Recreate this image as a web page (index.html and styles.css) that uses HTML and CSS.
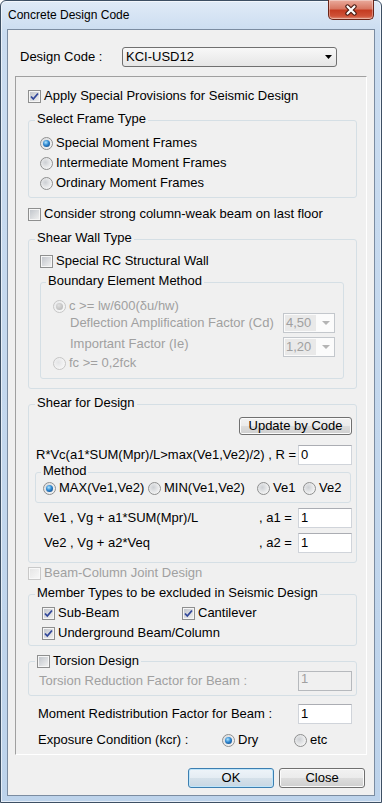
FILE: index.html
```html
<!DOCTYPE html>
<html lang="en">
<head>
  <meta charset="UTF-8">
  <title>Concrete Design Code</title>
  <link rel="stylesheet" href="styles.css">
</head>
<body>
  <div class="window">
    <div class="titlebar">
      <span class="title">Concrete Design Code</span>
      <span class="close-btn">
        <svg width="14" height="12" viewBox="0 0 14 12">
          <path d="M3.5 2.5 L10.5 9.5 M10.5 2.5 L3.5 9.5" stroke="#4a1b12" stroke-width="4.4" stroke-linecap="round"/>
          <path d="M3.5 2.5 L10.5 9.5 M10.5 2.5 L3.5 9.5" stroke="#fff" stroke-width="2.2" stroke-linecap="round"/>
        </svg>
      </span>
    </div>

    <div class="client">
      <div class="code-row">
        <span class="code-label">Design Code :</span>
        <div class="combo code-combo">
          <span class="combo-value">KCI-USD12</span>
          <svg width="7" height="4" viewBox="0 0 7 4"><path d="M0 0H7L3.5 4Z" fill="#000"/></svg>
        </div>
      </div>

      <div class="panel">
        <div class="row">
          <span class="chk"><svg width="11" height="11" viewBox="0 0 11 11"><path d="M2 5.5 L4.3 8 L9 2.5" fill="none" stroke="#31479a" stroke-width="1.8"/></svg></span>
          Apply Special Provisions for Seismic Design
        </div>

        <fieldset class="group frame-group">
          <legend>Select Frame Type</legend>
          <div class="group-body">
            <div class="row"><span class="radio on"></span>Special Moment Frames</div>
            <div class="row"><span class="radio"></span>Intermediate Moment Frames</div>
            <div class="row"><span class="radio"></span>Ordinary Moment Frames</div>
          </div>
        </fieldset>

        <div class="row consider-row"><span class="chk"></span>Consider strong column-weak beam on last floor</div>

        <fieldset class="group wall-group">
          <legend>Shear Wall Type</legend>
          <div class="group-body">
            <div class="row"><span class="chk"></span>Special RC Structural Wall</div>

            <fieldset class="group boundary-group">
              <legend>Boundary Element Method</legend>
              <div class="group-body">
                <div class="row dis"><span class="radio on dis"></span>c &gt;= lw/600(δu/hw)</div>
                <div class="field-row factor-row dis">
                  <span>Deflection Amplification Factor (Cd)</span>
                  <div class="combo small-combo">
                    <span class="combo-value">4,50</span>
                    <svg width="8" height="4" viewBox="0 0 8 4"><path d="M0 0H8L4 4Z" fill="#b4b4b4"/></svg>
                  </div>
                </div>
                <div class="field-row factor-row second dis">
                  <span class="raised">Important Factor (Ie)</span>
                  <div class="combo small-combo">
                    <span class="combo-value">1,20</span>
                    <svg width="8" height="4" viewBox="0 0 8 4"><path d="M0 0H8L4 4Z" fill="#b4b4b4"/></svg>
                  </div>
                </div>
                <div class="row dis fc-row"><span class="radio dis"></span>fc &gt;= 0,2fck</div>
              </div>
            </fieldset>
          </div>
        </fieldset>

        <fieldset class="group shear-group">
          <legend>Shear for Design</legend>
          <div class="group-body">
            <div class="update-row"><button class="btn update-btn">Update by Code</button></div>
            <div class="field-row r-row">
              <span>R*Vc(a1*SUM(Mpr)/L&gt;max(Ve1,Ve2)/2) , R =</span>
              <span class="edit">0</span>
            </div>

            <fieldset class="group method-group">
              <legend>Method</legend>
              <div class="group-body">
                <div class="row method-row">
                  <span class="opt opt-max"><span class="radio on"></span>MAX(Ve1,Ve2)</span>
                  <span class="opt opt-min"><span class="radio"></span>MIN(Ve1,Ve2)</span>
                  <span class="opt opt-ve1"><span class="radio"></span>Ve1</span>
                  <span class="opt"><span class="radio"></span>Ve2</span>
                </div>
              </div>
            </fieldset>

            <div class="field-row ve-row">
              <span class="ve-formula">Ve1 , Vg + a1*SUM(Mpr)/L</span>
              <span>, a1 =</span>
              <span class="edit">1</span>
            </div>
            <div class="field-row ve-row">
              <span class="ve-formula">Ve2 , Vg + a2*Veq</span>
              <span>, a2 =</span>
              <span class="edit">1</span>
            </div>
          </div>
        </fieldset>

        <div class="row dis beam-row"><span class="chk dis"></span>Beam-Column Joint Design</div>

        <fieldset class="group member-group">
          <legend>Member Types to be excluded in Seismic Design</legend>
          <div class="group-body">
            <div class="row">
              <span class="opt opt-sub">
                <span class="chk"><svg width="11" height="11" viewBox="0 0 11 11"><path d="M2 5.5 L4.3 8 L9 2.5" fill="none" stroke="#31479a" stroke-width="1.8"/></svg></span>
                Sub-Beam
              </span>
              <span class="opt">
                <span class="chk"><svg width="11" height="11" viewBox="0 0 11 11"><path d="M2 5.5 L4.3 8 L9 2.5" fill="none" stroke="#31479a" stroke-width="1.8"/></svg></span>
                Cantilever
              </span>
            </div>
            <div class="row">
              <span class="chk"><svg width="11" height="11" viewBox="0 0 11 11"><path d="M2 5.5 L4.3 8 L9 2.5" fill="none" stroke="#31479a" stroke-width="1.8"/></svg></span>
              Underground Beam/Column
            </div>
          </div>
        </fieldset>

        <fieldset class="group torsion-group">
          <legend><span class="row"><span class="chk"></span>Torsion Design</span></legend>
          <div class="group-body">
            <div class="field-row dis">
              <span>Torsion Reduction Factor for Beam :</span>
              <span class="edit dis">1</span>
            </div>
          </div>
        </fieldset>

        <div class="field-row plain-row moment-row">
          <span>Moment Redistribution Factor for Beam :</span>
          <span class="edit">1</span>
        </div>

        <div class="row plain-row exposure-row">
          <span class="exposure-label">Exposure Condition (kcr) :</span>
          <span class="opt opt-dry"><span class="radio on"></span>Dry</span>
          <span class="opt"><span class="radio"></span>etc</span>
        </div>
      </div>

      <div class="buttons">
        <button class="btn dlg-btn default">OK</button>
        <button class="btn dlg-btn">Close</button>
      </div>
    </div>
  </div>
</body>
</html>
```

FILE: styles.css
```css
body {
  margin: 0;
  font-family: "Liberation Sans", Arial, sans-serif;
  font-size: 13px;
  line-height: 16px;
  color: #000;
}

.window {
  width: 382px;
  height: 803px;
  box-sizing: border-box;
  display: flex;
  flex-direction: column;
  padding: 0 6px 6px;
  border: 1px solid #3d4f63;
  border-radius: 6px 6px 0 0;
  background: linear-gradient(#e0ebf7, #cadcf0 32px, #bdd3eb);
  box-shadow: inset 0 0 0 1px rgba(255, 255, 255, 0.6);
}

.titlebar {
  height: 28px;
  flex: none;
  display: flex;
  align-items: center;
  justify-content: space-between;
  padding-left: 1px;
}
.title {
  font-size: 12px;
}
.close-btn {
  align-self: flex-start;
  margin: -1px 1px 0 0;
  width: 46px;
  height: 20px;
  box-sizing: border-box;
  display: flex;
  align-items: center;
  justify-content: center;
  border: 1px solid #6b2417;
  border-top: none;
  border-radius: 0 0 5px 5px;
  background: linear-gradient(#eaab9c, #d87863 45%, #c53c22 55%, #cf5238 85%, #e19079);
  box-shadow: inset 0 0 0 1px rgba(255, 255, 255, 0.35);
}

.client {
  flex: 1;
  display: flex;
  flex-direction: column;
  padding: 17px 7px 0;
  border: 1px solid #7b8ca1;
  background: #f0f0f0;
}

.code-row {
  display: flex;
  align-items: center;
  height: 20px;
  padding-left: 5px;
}
.code-label {
  width: 102px;
}

/* combo boxes */
.combo {
  display: flex;
  align-items: center;
  box-sizing: border-box;
  height: 20px;
}
.combo-value {
  flex: 1;
}
.code-combo {
  width: 215px;
  padding: 0 4px 0 3px;
  border: 1px solid #707070;
  border-radius: 3px;
  background: linear-gradient(#f8f8f8, #e6e6e6);
}
.small-combo {
  width: 52px;
  margin-left: auto;
  padding: 0 4px 0 1px;
  border: 1px solid #c3c7cc;
  background: #fbfbfb;
}
.small-combo .combo-value {
  flex: none;
  width: 30px;
  line-height: 16px;
  padding-left: 1px;
  background: #e9e9e9;
  margin-right: auto;
}

/* main panel */
.panel {
  display: flex;
  flex-direction: column;
  margin-top: 9px;
  padding: 11px 9px 6px 12px;
  border: 1px solid #a0a0a0;
  border-right-color: #fff;
  border-bottom-color: #fff;
}

.row {
  display: flex;
  align-items: center;
  height: 16px;
  gap: 3px;
  white-space: nowrap;
}
.field-row {
  display: flex;
  align-items: center;
  height: 20px;
  white-space: nowrap;
}
.field-row .edit {
  margin-left: auto;
}
.dis {
  color: #a0a0a0;
}

.opt {
  display: flex;
  align-items: center;
  gap: 3px;
}

/* check boxes and radio buttons */
.chk {
  flex: none;
  width: 13px;
  height: 13px;
  box-sizing: border-box;
  padding: 1px;
  border: 1px solid #8e8f8f;
  background: linear-gradient(135deg, #c2c6cc, #efefef) content-box, #f6f6f6;
}
.chk svg {
  display: block;
  margin: -1px;
}
.chk.dis {
  border-color: #c9c9c9;
  background: linear-gradient(135deg, #e6e6e6, #f7f7f7) content-box, #f8f8f8;
}

.radio {
  flex: none;
  width: 13px;
  height: 13px;
  box-sizing: border-box;
  display: flex;
  align-items: center;
  justify-content: center;
  border: 1px solid #8e8f8f;
  border-radius: 50%;
  background: radial-gradient(circle at 40% 40%, #cdd0d4, #f5f5f5 75%);
}
.radio.on::after {
  content: "";
  width: 7px;
  height: 7px;
  border-radius: 50%;
  background: radial-gradient(circle at 40% 35%, #b0e6ff, #2d86d0 45%, #0c3a72);
}
.radio.dis {
  border-color: #c6c6c6;
  background: radial-gradient(circle at 40% 40%, #e3e4e6, #f7f7f7 75%);
}
.radio.dis.on::after {
  background: radial-gradient(circle at 40% 35%, #e0e0e0, #b0b0b0);
}

/* edit boxes */
.edit {
  width: 54px;
  height: 20px;
  box-sizing: border-box;
  padding: 0 2px;
  line-height: 18px;
  border: 1px solid #d0d4da;
  border-top-color: #abadb3;
  background: #fff;
}
.edit.dis {
  line-height: 14px;
  border-color: #b6b9bd;
  background: #f0f0f0;
}

/* group boxes */
.group {
  margin: 0;
  padding: 0;
  min-width: 0;
  border: 1px solid #d5dfe5;
  border-radius: 3px;
}
.group legend {
  margin-left: 6px;
  padding: 0 2px 3px;
  line-height: 14px;
}
.group-body {
  display: flex;
  flex-direction: column;
}

.frame-group {
  margin-top: 8px;
}
.frame-group .group-body {
  gap: 4px;
  padding: 6px 0 6px 11px;
}

.consider-row {
  margin-top: 8px;
}

.wall-group {
  margin-top: 9px;
}
.wall-group > .group-body {
  padding: 5px 12px 9px 11px;
}
.boundary-group {
  margin-top: 5px;
}
.boundary-group legend {
  margin-left: 5px;
}
.boundary-group .group-body {
  padding: 7px 8px 7px 12px;
}
.factor-row {
  margin-top: -1px;
  padding-left: 17px;
}
.factor-row.second {
  margin-top: 4px;
}
.raised {
  padding-bottom: 6px;
}
.fc-row {
  margin-top: -2px;
}

.shear-group {
  margin-top: 7px;
}
.shear-group > .group-body {
  padding: 4px 4px 9px 6px;
}
.update-row {
  display: flex;
  justify-content: flex-end;
}
.r-row {
  margin-top: 10px;
  padding-left: 1px;
}
.method-group {
  margin-right: 1px;
}
.method-group legend {
  margin-left: 5px;
  line-height: 12px;
}
.method-group .group-body {
  padding: 0 0 6px 7px;
}
.method-row {
  gap: 0;
}
.opt-max {
  width: 105px;
}
.opt-min {
  width: 109px;
}
.opt-ve1 {
  width: 46px;
}
.ve-row {
  margin-top: 5px;
  padding-left: 9px;
}
.ve-formula {
  width: 215px;
}

.beam-row {
  margin-top: 2px;
}

.member-group {
  margin-top: 5px;
}
.member-group .group-body {
  gap: 4px;
  padding: 2px 0 4px 13px;
}
.member-group .row {
  gap: 0;
}
.member-group .opt-sub {
  width: 140px;
}
.member-group .group-body > .row:last-child {
  gap: 3px;
}

.torsion-group {
  margin-top: 7px;
}
.torsion-group legend {
  padding-bottom: 1px;
  line-height: 16px;
}
.torsion-group .group-body {
  padding: 1px 4px 4px 10px;
}

.plain-row {
  padding: 0 5px 0 10px;
}
.moment-row {
  margin-top: 8px;
}
.exposure-row {
  margin-top: 8px;
  gap: 0;
}
.exposure-label {
  width: 184px;
}
.opt-dry {
  width: 72px;
}

/* push buttons */
.btn {
  font: inherit;
  color: #000;
  padding: 0;
  box-sizing: border-box;
  border: 1px solid #707070;
  border-radius: 3px;
  background: linear-gradient(#f2f2f2, #ebebeb 50%, #dddddd 50%, #cfcfcf);
  box-shadow: inset 0 0 0 1px #fbfbfb;
}
.update-btn {
  width: 113px;
  height: 18px;
  line-height: 14px;
}
.buttons {
  display: flex;
  justify-content: flex-end;
  gap: 5px;
  margin-top: 13px;
  padding-right: 2px;
}
.dlg-btn {
  width: 86px;
  height: 20px;
  line-height: 16px;
}
.dlg-btn.default {
  border-color: #3c7fb1;
  background: linear-gradient(#eef4f9, #e4ecf3 50%, #d5e1ea 50%, #c8d7e3);
  box-shadow: inset 0 0 0 1px #bfe5fa;
}
```
